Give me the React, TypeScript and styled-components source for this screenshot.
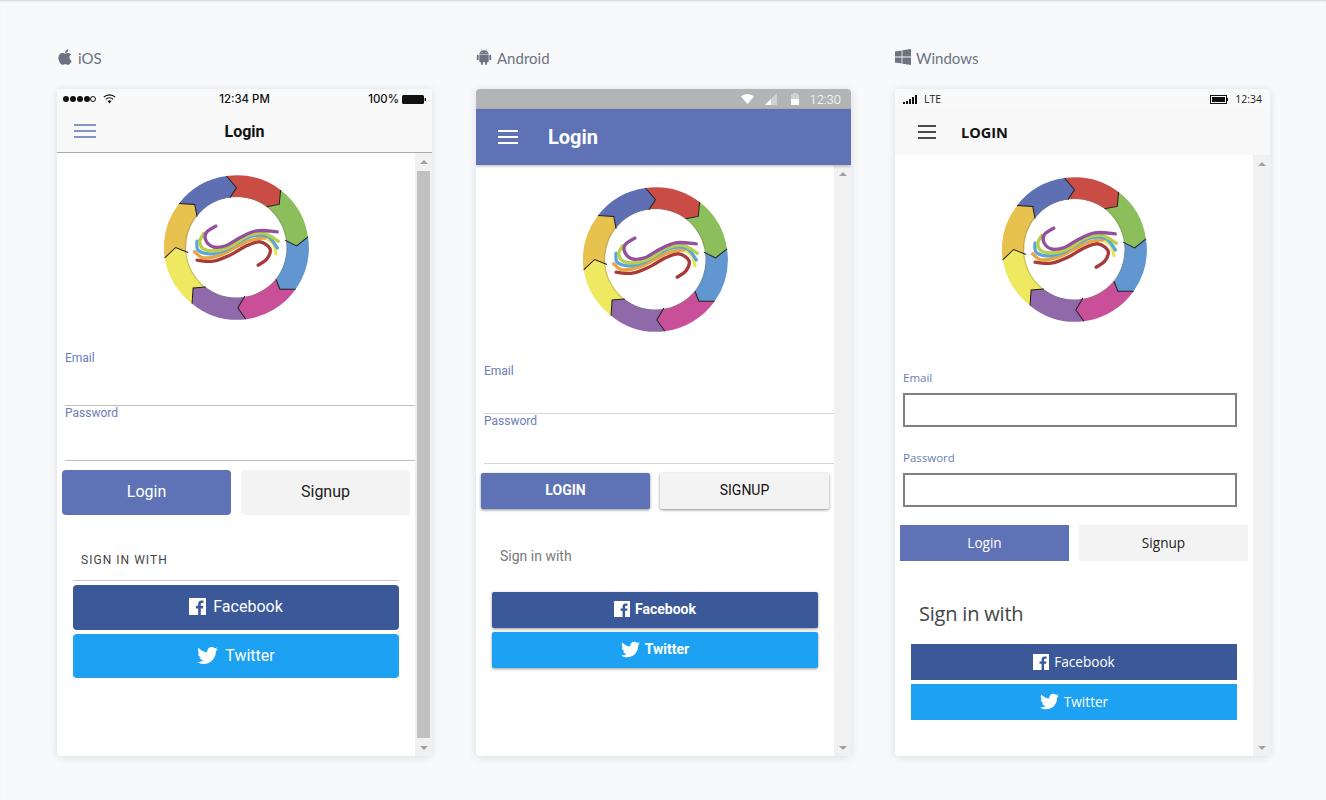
import styled, { createGlobalStyle, css } from 'styled-components';
import { FaApple, FaTwitter } from 'react-icons/fa';

type Os = 'ios' | 'android' | 'windows';

const GlobalStyle = createGlobalStyle`
  html, body {
    margin: 0;
    padding: 0;
    background: #f8f9fb;
  }
`;

const Page = styled.div`
  box-sizing: border-box;
  height: 800px;
  overflow: hidden;
  padding: 48px 56px 0 57px;
  display: flex;
  gap: 44px;
  background: #f8f9fb;
  box-shadow: inset 0 2px 2px -1px rgba(0, 0, 0, 0.16);
  font-family: Roboto, sans-serif;
`;

const Column = styled.section`
  width: 375px;
`;

const PlatformLabel = styled.h2`
  margin: 0 0 21px;
  height: 20px;
  display: flex;
  align-items: center;
  gap: 5px;
  font-family: Lato, sans-serif;
  font-size: 15px;
  font-weight: 400;
  color: #6c7380;
`;

const AppleIcon = styled(FaApple)`
  flex: none;
  width: 16px;
  height: 18px;
  margin-top: -3px;
  color: #6c7380;
`;

const PlatformGlyph = styled.svg`
  flex: none;
  width: 16px;
  height: 16px;
  margin-top: -2px;
  fill: #6c7380;
`;

const Phone = styled.div`
  height: 667px;
  display: flex;
  flex-direction: column;
  background: #fff;
  border-radius: 4px;
  overflow: hidden;
  box-shadow: 0 1px 8px rgba(40, 50, 70, 0.14);
`;

const StatusBar = styled.div<{ $os: Os }>`
  position: relative;
  flex: none;
  height: 20px;
  display: flex;
  align-items: center;
  box-sizing: border-box;
  ${(p) =>
    p.$os === 'ios' &&
    css`
      padding: 0 6px;
      background: #f9f9f9;
      color: #111;
      font-family: Inter, sans-serif;
      font-size: 11.4px;
      font-weight: 500;
    `}
  ${(p) =>
    p.$os === 'android' &&
    css`
      justify-content: flex-end;
      padding-right: 10px;
      background: #b3b4b5;
      color: #fff;
      font-size: 13px;
      font-weight: 300;
    `}
  ${(p) =>
    p.$os === 'windows' &&
    css`
      padding: 0 8px;
      background: #f9f9f9;
      color: #222;
      font-family: 'Open Sans', sans-serif;
      font-size: 10.5px;
    `}
`;

const StatusGroup = styled.div<{ $gap?: number; $push?: boolean }>`
  display: flex;
  align-items: center;
  gap: ${(p) => p.$gap ?? 0}px;
  margin-left: ${(p) => (p.$push ? 'auto' : 0)};
`;

const CenterClock = styled.span`
  position: absolute;
  left: 0;
  right: 0;
  text-align: center;
`;

const Header = styled.header<{ $os: Os }>`
  position: relative;
  flex: none;
  display: flex;
  align-items: center;
  ${(p) =>
    p.$os === 'ios' &&
    css`
      height: 44px;
      padding-left: 17px;
      background: #f9f9f9;
      border-bottom: 1px solid #a9a9a9;
      box-sizing: border-box;
      color: #111;
    `}
  ${(p) =>
    p.$os === 'android' &&
    css`
      height: 56px;
      padding-left: 22px;
      gap: 30px;
      background: #5e72b5;
      color: #fff;
      box-shadow: 0 1px 3px rgba(0, 0, 0, 0.3);
      z-index: 1;
    `}
  ${(p) =>
    p.$os === 'windows' &&
    css`
      height: 46px;
      padding-left: 23px;
      gap: 25px;
      background: #f8f8f8;
      color: #111;
    `}
`;

const Menu = styled.svg<{ $os: Os }>`
  flex: none;
  display: block;
  color: ${(p) => (p.$os === 'ios' ? '#5e72b5' : p.$os === 'android' ? '#fff' : '#111')};
`;

const Title = styled.h1<{ $os: Os }>`
  margin: 0;
  ${(p) =>
    p.$os === 'ios' &&
    css`
      position: absolute;
      left: 0;
      right: 0;
      padding-top: 2px;
      text-align: center;
      font-size: 16px;
      font-weight: 700;
    `}
  ${(p) =>
    p.$os === 'android' &&
    css`
      font-size: 20px;
      font-weight: 700;
    `}
  ${(p) =>
    p.$os === 'windows' &&
    css`
      font-family: 'Open Sans', sans-serif;
      font-size: 14.5px;
      font-weight: 700;
    `}
`;

const Content = styled.div`
  flex: 1;
  min-height: 0;
  display: flex;
`;

const Body = styled.main`
  flex: 1;
  min-width: 0;
  display: flex;
  flex-direction: column;
  padding-top: 22px;
`;

const Scrollbar = styled.div`
  flex: none;
  width: 17px;
  display: flex;
  flex-direction: column;
  background: #f1f1f1;
`;

const ScrollArrow = styled.div<{ $down?: boolean }>`
  flex: none;
  height: 17px;
  display: flex;
  align-items: center;
  justify-content: center;

  &::before {
    content: '';
    border-left: 4px solid transparent;
    border-right: 4px solid transparent;
    ${(p) =>
      p.$down ? 'border-top: 4px solid #a3a3a3;' : 'border-bottom: 4px solid #a3a3a3;'}
  }
`;

const ScrollTrack = styled.div`
  flex: 1;
  display: flex;
  padding: 1px 2px;
`;

const ScrollThumb = styled.div`
  flex: 1;
  background: #c1c1c1;
`;

const LogoWrap = styled.div<{ $os: Os }>`
  flex: none;
  height: 145px;
  display: flex;
  justify-content: center;
  padding-left: ${(p) => (p.$os === 'ios' ? 0 : 1)}px;
`;

const Form = styled.form<{ $os: Os }>`
  margin-top: ${(p) => ({ ios: 31, android: 32, windows: 49 }[p.$os])}px;
  display: flex;
  flex-direction: column;
  gap: ${(p) => (p.$os === 'windows' ? 24 : 0)}px;
`;

const Field = styled.div<{ $os: Os }>`
  margin-left: 8px;
  ${(p) =>
    p.$os !== 'windows' &&
    css`
      box-sizing: border-box;
      height: ${p.$os === 'ios' ? 55 : 50}px;
      border-bottom: 1px solid ${p.$os === 'ios' ? '#bdbdbd' : '#d5d5d5'};
    `}
`;

const FieldLabel = styled.label<{ $os: Os }>`
  display: block;
  font-family: ${(p) => (p.$os === 'windows' ? "'Open Sans', sans-serif" : 'Roboto, sans-serif')};
  font-size: ${(p) => (p.$os === 'windows' ? 11.5 : 12)}px;
  font-weight: 400;
  line-height: 14px;
  color: #6a7cba;
`;

const BoxInput = styled.div`
  box-sizing: border-box;
  width: 334px;
  height: 34px;
  margin-top: 8px;
  border: 2px solid #808080;
  background: #fff;
`;

const ButtonRow = styled.div<{ $os: Os }>`
  margin: ${(p) => (p.$os === 'windows' ? 18 : 9)}px 0 0 5px;
  display: flex;
  gap: 10px;
`;

const ActionButton = styled.div<{ $os: Os; $primary?: boolean }>`
  box-sizing: border-box;
  width: 169px;
  height: ${(p) => (p.$os === 'ios' ? 45 : 36)}px;
  padding-bottom: ${(p) => (p.$os === 'windows' ? 1 : 2)}px;
  display: flex;
  align-items: center;
  justify-content: center;
  background: ${(p) => (p.$primary ? '#5e72b5' : '#f3f3f3')};
  color: ${(p) => (p.$primary ? '#fff' : '#222')};
  ${(p) =>
    p.$os === 'ios' &&
    css`
      border-radius: 4px;
      font-size: 16px;
    `}
  ${(p) =>
    p.$os === 'android' &&
    css`
      border-radius: 2px;
      font-size: 14px;
      font-weight: ${p.$primary ? 700 : 400};
      color: ${p.$primary ? '#fff' : '#111'};
      box-shadow: 0 1px 3px rgba(0, 0, 0, 0.45);
    `}
  ${(p) =>
    p.$os === 'windows' &&
    css`
      font-family: 'Open Sans', sans-serif;
      font-size: 13.6px;
    `}
`;

const Social = styled.div`
  margin: 0 16px;
  width: 326px;
`;

const SignInTitle = styled.div<{ $os: Os }>`
  ${(p) =>
    p.$os === 'ios' &&
    css`
      margin-top: 38px;
      padding: 0 0 13px 8px;
      border-bottom: 1px solid #c8c8c8;
      font-size: 12px;
      line-height: 14px;
      letter-spacing: 1.03px;
      text-transform: uppercase;
      color: #444;
    `}
  ${(p) =>
    p.$os === 'android' &&
    css`
      margin-top: 39px;
      padding: 0 0 28px 8px;
      font-size: 14px;
      line-height: 16px;
      color: #7a7a7a;
    `}
  ${(p) =>
    p.$os === 'windows' &&
    css`
      margin-top: 39px;
      padding: 0 0 16px 8px;
      font-family: 'Open Sans', sans-serif;
      font-size: 20px;
      font-weight: 400;
      letter-spacing: -0.2px;
      line-height: 28px;
      color: #444;
    `}
`;

const SocialList = styled.div<{ $os: Os }>`
  display: flex;
  flex-direction: column;
  gap: 4px;
  margin-top: ${(p) => (p.$os === 'ios' ? 4 : 0)}px;
`;

const SocialButton = styled.div<{ $os: Os; $bg: string; $height: number }>`
  box-sizing: border-box;
  height: ${(p) => p.$height}px;
  padding-bottom: ${(p) => (p.$os === 'windows' ? 1 : 2)}px;
  display: flex;
  align-items: center;
  justify-content: center;
  background: ${(p) => p.$bg};
  color: #fff;
  ${(p) =>
    p.$os === 'ios' &&
    css`
      gap: 7px;
      border-radius: 4px;
      font-size: 16px;
    `}
  ${(p) =>
    p.$os === 'android' &&
    css`
      gap: 5px;
      border-radius: 2px;
      font-size: 14px;
      font-weight: 700;
      box-shadow: 0 1px 3px rgba(0, 0, 0, 0.4);
    `}
  ${(p) =>
    p.$os === 'windows' &&
    css`
      gap: 5px;
      font-family: 'Open Sans', sans-serif;
      font-size: 13.6px;
    `}
`;

const CX = 259.5;
const CY = 246.5;
const R = 217;
const INNER = 150;

// outer point, arrow tip, inner point of each boundary, going clockwise from the top
const edges = [
  { outer: [230, 33], tip: [260, 68], inner: [240, 98] },
  { outer: [392, 75], tip: [388, 118], inner: [350, 125] },
  { outer: [474, 215], tip: [440, 242], inner: [405, 225] },
  { outer: [437, 372], tip: [390, 372], inner: [378, 342] },
  { outer: [288, 462], tip: [264, 428], inner: [285, 392] },
  { outer: [127, 415], tip: [130, 368], inner: [168, 365] },
  { outer: [45, 278], tip: [78, 247], inner: [115, 262] },
  { outer: [88, 115], tip: [135, 118], inner: [142, 155] },
];
const ringColors = ['#c94d45', '#8cbf5c', '#6196d1', '#c95098', '#9069ab', '#efe962', '#e8c24f', '#5f6fb3'];

// the ribbons of the swoosh, traced point by point
const ribbons: { color: string; points: number[][] }[] = [
  { color: '#a93a3a', points: [[22, 135], [70, 138], [120, 120], [170, 92], [210, 80], [240, 100], [232, 130], [205, 150]] },
  { color: '#f0e353', points: [[225, 68], [250, 85], [258, 115]] },
  { color: '#e9a33f', points: [[15, 110], [40, 128], [90, 120], [135, 98], [180, 76], [225, 68]] },
  { color: '#58a6dc', points: [[22, 78], [25, 105], [60, 116], [105, 106], [150, 80], [190, 62], [235, 65], [262, 98]] },
  { color: '#b7cf4a', points: [[42, 55], [30, 80], [45, 103], [85, 106], [130, 90], [170, 64], [220, 54], [265, 78]] },
  { color: '#94509f', points: [[78, 33], [50, 52], [48, 75], [70, 95], [110, 91], [150, 68], [200, 47], [262, 50]] },
];

const smoothPath = (pts: number[][]) => {
  let d = `M${pts[0]}`;
  for (let i = 0; i < pts.length - 1; i++) {
    const a = pts[i - 1] ?? pts[i];
    const b = pts[i];
    const c = pts[i + 1];
    const e = pts[i + 2] ?? c;
    d += ` C${b[0] + (c[0] - a[0]) / 6} ${b[1] + (c[1] - a[1]) / 6} ${c[0] - (e[0] - b[0]) / 6} ${c[1] - (e[1] - b[1]) / 6} ${c[0]} ${c[1]}`;
  }
  return d;
};

const Logo = () => (
  <svg width={145} height={145} viewBox="43 30 434 434">
    {edges.map((e, i) => {
      const n = edges[(i + 1) % edges.length];
      const d = `M${e.outer} A${R} ${R} 0 0 1 ${n.outer} L${n.tip} L${n.inner} A${INNER} ${INNER} 0 0 0 ${e.inner} L${e.tip} Z`;
      return <path key={i} d={d} fill={ringColors[i]} />;
    })}
    <circle cx={CX} cy={CY} r={INNER + 2} fill="none" stroke="#7d7d70" strokeOpacity={0.35} strokeWidth={4} />
    <circle cx={CX} cy={CY} r={INNER} fill="#fff" />
    {edges.map((e, i) => (
      <polyline key={i} points={`${e.outer} ${e.tip} ${e.inner}`} fill="none" stroke="#1c1c1c" strokeWidth={3} />
    ))}
    <g transform="translate(120 150)" fill="none" strokeWidth={10} strokeLinecap="round">
      {ribbons.map((r) => (
        <path key={r.color} d={smoothPath(r.points)} stroke={r.color} />
      ))}
    </g>
  </svg>
);

const AndroidGlyph = () => (
  <PlatformGlyph viewBox="0 0 16 16">
    <path d="M3.3 5.500a4.700 4.300 0 0 1 9.400 0z" />
    <path d="M5.200.3l1.200 1.900M10.800.3L9.600 2.200" stroke="#6c7380" strokeWidth={0.6} />
    <circle cx={6} cy={3.600} r={0.5} fill="#f8f9fb" />
    <circle cx={10} cy={3.600} r={0.5} fill="#f8f9fb" />
    <path d="M3.300 6h9.400v6.300a1 1 0 0 1-1 1H4.300a1 1 0 0 1-1-1z" />
    <rect x={0.8} y={5.800} width={1.900} height={5.400} rx={0.95} />
    <rect x={13.300} y={5.800} width={1.900} height={5.400} rx={0.95} />
    <rect x={5} y={12} width={1.900} height={4} rx={0.95} />
    <rect x={9.100} y={12} width={1.900} height={4} rx={0.95} />
  </PlatformGlyph>
);

const WindowsGlyph = () => (
  <PlatformGlyph viewBox="0 0 16 16">
    <path d="M0 2.400L6.600 1.500V7.600H0z" />
    <path d="M7.400 1.300L16 0V7.600H7.400z" />
    <path d="M0 8.400H6.600V14.500L0 13.600z" />
    <path d="M7.400 8.400H16V16L7.400 14.700z" />
  </PlatformGlyph>
);

const FacebookIcon = ({ size }: { size: number }) => (
  <svg width={size} height={size} viewBox="0 0 24 24" fill="#fff">
    <path
      fillRule="evenodd"
      d="M0 0h24v24H0zM16.600 24v-9.300h3.100l.5-3.600h-3.600V8.800c0-1 .3-1.800 1.800-1.800h1.900V3.700c-.3 0-1.500-.1-2.800-.1-2.700 0-4.600 1.700-4.600 4.800v2.700H9.800v3.600h3.100V24z"
    />
  </svg>
);

const HamburgerIcon = ({ os }: { os: Os }) => {
  const w = os === 'ios' ? 22 : os === 'android' ? 20 : 18;
  const h = 12;
  const sw = os === 'android' ? 2 : 1.5;
  return (
    <Menu $os={os} width={w} height={h + 2} viewBox={`0 0 ${w} ${h + 2}`}>
      {[1, 7, 13].map((y) => (
        <line key={y} x1={0} x2={w} y1={y} y2={y} stroke="currentColor" strokeWidth={sw} />
      ))}
    </Menu>
  );
};

const IosStatus = () => (
  <>
    <StatusGroup $gap={7}>
      <svg width={33} height={6} viewBox="0 0 33 6">
        {[3, 10, 17, 24].map((x) => (
          <circle key={x} cx={x} cy={3} r={3} fill="#111" />
        ))}
        <circle cx={30} cy={3} r={2.500} fill="none" stroke="#111" />
      </svg>
      <svg width={13} height={10} viewBox="0 0 13 10" fill="none" stroke="#111" strokeWidth={1.2}>
        <path d="M.8 3.200a8 8 0 0 1 11.400 0M2.800 5.300a5.200 5.200 0 0 1 7.400 0" />
        <path d="M4.600 7.200a2.700 2.700 0 0 1 3.800 0L6.500 9.400z" fill="#111" stroke="none" />
      </svg>
    </StatusGroup>
    <CenterClock>12:34 PM</CenterClock>
    <StatusGroup $gap={3} $push>
      <span>100%</span>
      <svg width={24} height={9} viewBox="0 0 24 9">
        <rect x={0} y={0} width={22} height={9} rx={1.500} fill="#111" />
        <rect x={22.600} y={3} width={1.400} height={3} fill="#111" />
      </svg>
    </StatusGroup>
  </>
);

const AndroidStatus = () => (
  <StatusGroup>
    <svg width={13} height={10} viewBox="0 0 13 10">
      <path d="M0 2.600C3.700-.8 9.300-.8 13 2.600L6.500 10z" fill="#fff" />
    </svg>
    <svg width={12} height={12} viewBox="0 0 12 12" style={{ marginLeft: 11 }}>
      <path d="M12 0v12H0z" fill="#d0d1d2" />
      <path d="M6 6v6H0z" fill="#fff" />
    </svg>
    <svg width={8} height={12} viewBox="0 0 8 12" style={{ marginLeft: 14 }}>
      <path d="M2 0h4v1h2v5H0V1h2z" fill="#d0d1d2" />
      <rect y={6} width={8} height={6} fill="#fff" />
    </svg>
    <span style={{ marginLeft: 10 }}>12:30</span>
  </StatusGroup>
);

const WindowsStatus = () => (
  <>
    <StatusGroup $gap={7}>
      <svg width={14} height={9} viewBox="0 0 14 9" fill="#111">
        <rect x={0} y={7} width={2} height={2} />
        <rect x={3} y={6} width={2} height={3} />
        <rect x={6} y={4} width={2} height={5} />
        <rect x={9} y={2} width={2} height={7} />
        <rect x={12} y={0} width={2} height={9} />
      </svg>
      <span>LTE</span>
    </StatusGroup>
    <StatusGroup $gap={7} $push>
      <svg width={18} height={9} viewBox="0 0 18 9">
        <rect x={0.500} y={0.500} width={16} height={8} fill="none" stroke="#111" />
        <rect x={2} y={2} width={13} height={5} fill="#111" />
        <rect x={17} y={3} width={1} height={3} fill="#111" />
      </svg>
      <span>12:34</span>
    </StatusGroup>
  </>
);

const platforms: { os: Os; name: string; icon: React.ReactNode }[] = [
  { os: 'ios', name: 'iOS', icon: <AppleIcon /> },
  { os: 'android', name: 'Android', icon: <AndroidGlyph /> },
  { os: 'windows', name: 'Windows', icon: <WindowsGlyph /> },
];

const DeviceColumn = ({ os, name, icon }: { os: Os; name: string; icon: React.ReactNode }) => {
  const socialHeights = os === 'ios' ? [45, 44] : [36, 36];
  const iconSize = os === 'ios' ? 17 : 16;
  return (
    <Column>
      <PlatformLabel>
        {icon}
        {name}
      </PlatformLabel>
      <Phone>
        <StatusBar $os={os}>
          {os === 'ios' && <IosStatus />}
          {os === 'android' && <AndroidStatus />}
          {os === 'windows' && <WindowsStatus />}
        </StatusBar>
        <Header $os={os}>
          <HamburgerIcon os={os} />
          <Title $os={os}>{os === 'windows' ? 'LOGIN' : 'Login'}</Title>
        </Header>
        <Content>
          <Body>
            <LogoWrap $os={os}>
              <Logo />
            </LogoWrap>
            <Form $os={os}>
              {['Email', 'Password'].map((label) => (
                <Field key={label} $os={os}>
                  <FieldLabel $os={os}>{label}</FieldLabel>
                  {os === 'windows' && <BoxInput />}
                </Field>
              ))}
            </Form>
            <ButtonRow $os={os}>
              <ActionButton $os={os} $primary>
                {os === 'android' ? 'LOGIN' : 'Login'}
              </ActionButton>
              <ActionButton $os={os}>{os === 'android' ? 'SIGNUP' : 'Signup'}</ActionButton>
            </ButtonRow>
            <Social>
              <SignInTitle $os={os}>Sign in with</SignInTitle>
              <SocialList $os={os}>
                <SocialButton $os={os} $bg="#3b5998" $height={socialHeights[0]}>
                  <FacebookIcon size={iconSize} />
                  Facebook
                </SocialButton>
                <SocialButton $os={os} $bg="#1da1f2" $height={socialHeights[1]}>
                  <FaTwitter size={os === 'ios' ? 21 : 19} />
                  Twitter
                </SocialButton>
              </SocialList>
            </Social>
          </Body>
          <Scrollbar>
            <ScrollArrow />
            <ScrollTrack>{os === 'ios' && <ScrollThumb />}</ScrollTrack>
            <ScrollArrow $down />
          </Scrollbar>
        </Content>
      </Phone>
    </Column>
  );
};

export default function App() {
  return (
    <>
      <GlobalStyle />
      <Page>
        {platforms.map((p) => (
          <DeviceColumn key={p.os} {...p} />
        ))}
      </Page>
    </>
  );
}
